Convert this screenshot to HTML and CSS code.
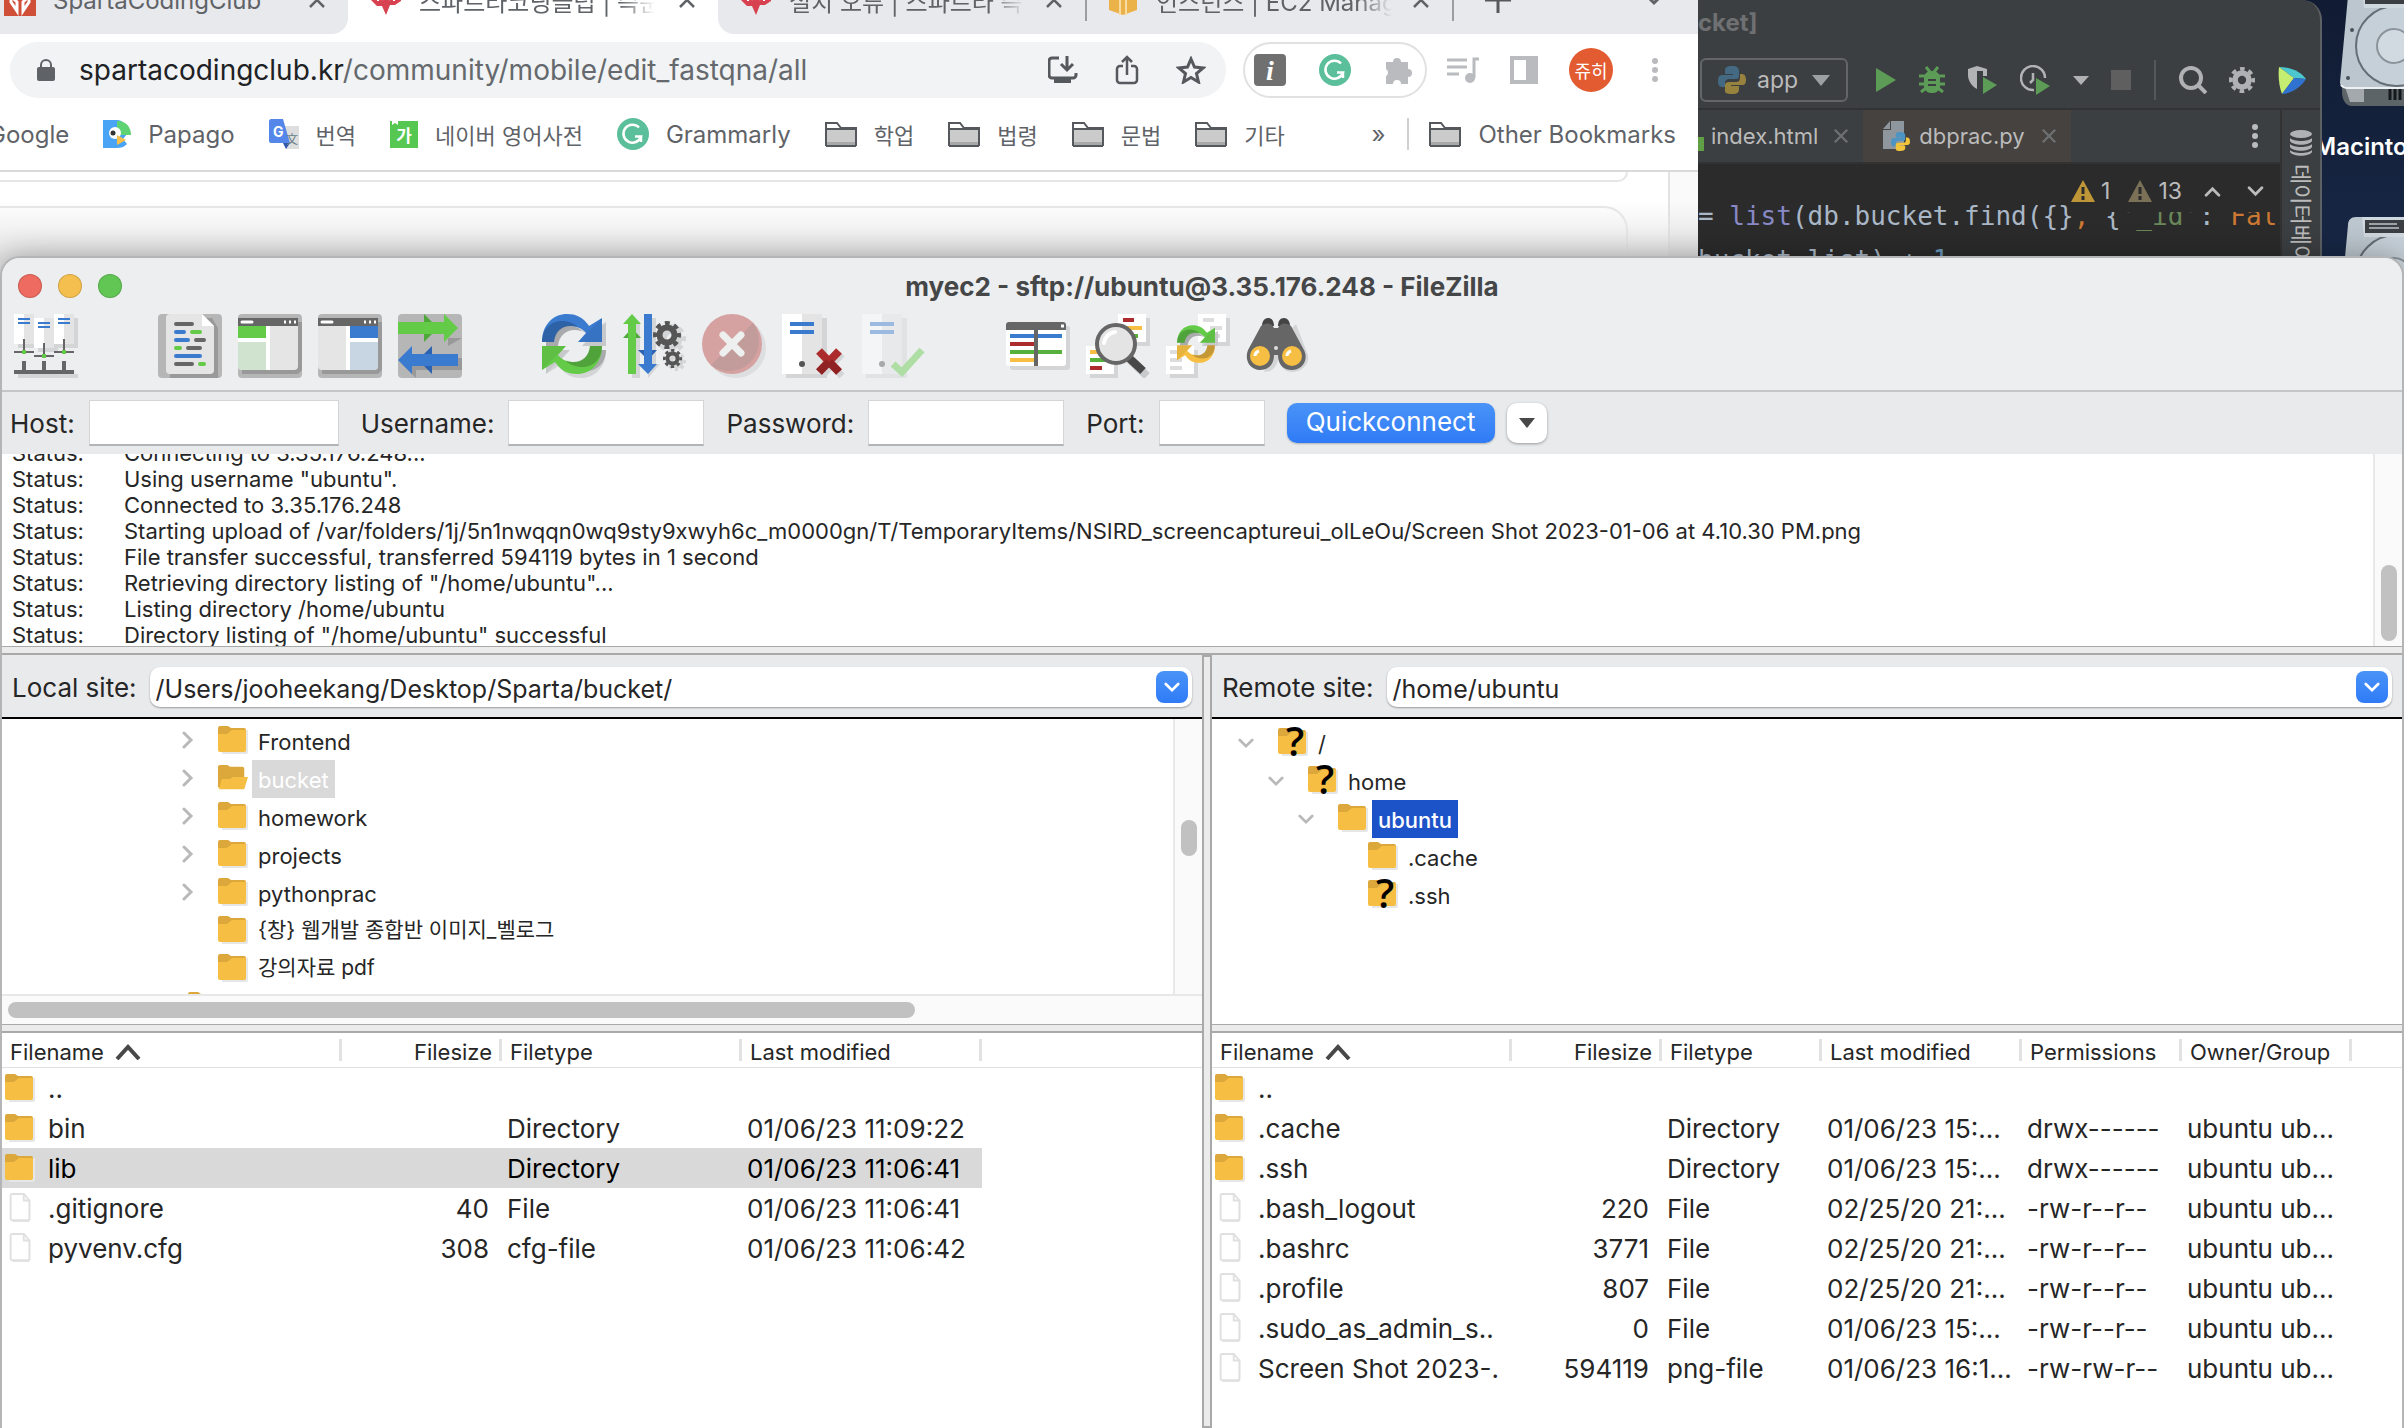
FILE: index.html
```html
<!DOCTYPE html>
<html lang="ko">
<head>
    <meta charset="utf-8">
    <title>myec2 - sftp://ubuntu@3.35.176.248 - FileZilla</title>
    <link rel="stylesheet" href="styles.css">
</head>
<body>
    <!-- Shared icons -->
    <svg class="sprite" aria-hidden="true">
        <symbol id="folder" viewBox="0 0 30 28">
            <path d="M3 4h27v22a2 2 0 0 1-2 2H4z" fill="#e6e6e6"/>
            <path d="M0 2a2 2 0 0 1 2-2h8l3 2h13a2 2 0 0 1 2 2v8H0z" fill="#dda83b"/>
            <path d="M0 8h9l5-4h14v20a2 2 0 0 1-2 2H2a2 2 0 0 1-2-2z" fill="#f6bf43"/>
        </symbol>
        <symbol id="folder-open" viewBox="0 0 32 28">
            <path d="M0 2a2 2 0 0 1 2-2h8l3 2h13a2 2 0 0 1 2 2v20H0z" fill="#dda83b"/>
            <path d="M1 26l3-11h9l3-2h16l-4 13z" fill="#f6bf43"/>
        </symbol>
        <symbol id="folder-unknown" viewBox="0 0 30 32">
            <use href="#folder" y="2" width="30" height="28"/>
            <text x="17" y="30" text-anchor="middle" class="unknown-mark">?</text>
        </symbol>
        <symbol id="file" viewBox="0 0 28 32">
            <path d="M5 1h14l6 7v20a3 3 0 0 1-3 3H8a3 3 0 0 1-3-3z" fill="#e4e4e4"/>
            <path d="M5 1h13l6 7v19a2 2 0 0 1-2 2H6a2 2 0 0 1-2-2V2z" fill="#fff" stroke="#e0e0e0" stroke-width="2"/>
            <path d="M18 1v7h6" fill="none" stroke="#e0e0e0" stroke-width="2"/>
        </symbol>
        <symbol id="chev-right" viewBox="0 0 12 18"><path d="M2 2l7 7-7 7" fill="none" stroke="#b9b9b9" stroke-width="3" stroke-linecap="round"/></symbol>
        <symbol id="chev-down" viewBox="0 0 18 12"><path d="M2 2l7 7 7-7" fill="none" stroke="currentColor" stroke-width="3" stroke-linecap="round"/></symbol>
        <symbol id="cross" viewBox="0 0 18 18"><path d="M2 2l14 14M16 2L2 16" fill="none" stroke="currentColor" stroke-width="2.5"/></symbol>
        <symbol id="bm-folder" viewBox="0 0 32 26">
            <path d="M1 24V2h11l4 5h15v17z" fill="#fff" stroke="#55585c" stroke-width="2"/>
            <path d="M2 9h28v12H2z" fill="#cbcbcb"/><path d="M2 21h28v3H2z" fill="#a9a9a9"/>
            <path d="M1 8h30M1 25h30" stroke="#55585c" stroke-width="2"/>
        </symbol>
        <symbol id="sparta" viewBox="0 0 32 32"><path d="M1 0h30v17l-6 4h-5l-4 10-4-9H7l-6-6z" fill="#d8414f"/><path d="M8 17v-6l4 4 4-5 4 5 4-4v6" fill="none" stroke="#fff" stroke-width="2"/></symbol>
        <symbol id="grammarly" viewBox="0 0 32 32">
            <circle cx="16" cy="16" r="16" fill="#5bbf9b"/>
            <path d="M22 9.500a9 9 0 1 0 2 9h-6M24 18v6" fill="none" stroke="#fff" stroke-width="2.500"/>
        </symbol>
        <symbol id="python" viewBox="0 0 28 28">
            <path d="M14 0c-6 0-7 2-7 5v3h8v1H4c-3 0-4 3-4 6s1 6 4 6h3v-4c0-3 2-4 4-4h7c2 0 3-1 3-3V5c0-3-2-5-7-5z" fill="#4b94c4"/>
            <path d="M14 28c6 0 7-2 7-5v-3h-8v-1h11c3 0 4-2 4-5s-1-6-4-6h-2v4c0 3-2 4-4 4h-7c-2 0-4 1-4 3v6c0 2 2 3 7 3z" fill="#f2c43c"/>
        </symbol>
        <symbol id="warn" viewBox="0 0 24 22"><path d="M12 0l12 22H0z" fill="currentColor"/><path d="M12 7v7M12 16v4" stroke="#2b2b2b" stroke-width="3"/></symbol>
        <symbol id="gear" viewBox="0 0 28 28">
            <circle cx="14" cy="14" r="12" fill="none" stroke="currentColor" stroke-width="4" stroke-dasharray="5 4.420" stroke-dashoffset="2.500"/>
            <circle cx="14" cy="14" r="7.500" fill="none" stroke="currentColor" stroke-width="6"/>
        </symbol>
        <symbol id="half-turn" viewBox="0 0 60 28">
            <path d="M0 28C0 10 12 0 25 0c9 0 16 3 22 12L60 4v24H36l8-9c-4-5-10-7-16-7-9 0-15 6-16 16z" fill="currentColor"/>
            <path d="M0 28C0 14 10 6 22 7c8 1 12 4 14 6-14-4-23 4-24 15z" opacity="0.200"/>
            <path d="M36 28L60 4v24z" opacity="0.060"/>
        </symbol>
        <symbol id="server" viewBox="0 0 46 64">
            <path d="M4 4h41v60H4z" fill="#d3d5d7"/><path d="M0 0h20v60H0z" fill="#fff"/><path d="M20 0h20v60H20z" fill="#e4e4e4"/>
            <path d="M8 10h24M8 18h24" stroke="#3a7bd0" stroke-width="4"/><circle cx="20" cy="50" r="3" fill="#555"/>
        </symbol>
        <symbol id="disk" viewBox="0 0 110 120">
            <path d="M2 88h108v30H12c-6 0-10-6-10-14z" fill="#5d6468"/>
            <path d="M4 96h20v18H10z" fill="#a3a9ad"/>
            <path d="M50 100v12M55 100v12M60 100v12" stroke="#16191c" stroke-width="3"/>
            <path d="M8 8c0-5 3-8 8-8h94v100H8c-5 0-8-2-8-6z" fill="#bcc6ce"/>
            <path d="M1 97c2 3 5 3 7 3h102" fill="none" stroke="#eef1f3" stroke-width="2"/>
            <circle cx="56" cy="58" r="40" fill="#c6d0d8" stroke="#656d75" stroke-width="2"/>
            <circle cx="54" cy="58" r="17" fill="#d1dae1" stroke="#8b949c" stroke-width="2"/>
            <path d="M22 0h88v20H24z" fill="#cfd8de"/><path d="M25 3h85v13H25z" fill="#3b3f44"/>
            <path d="M29 7h28M29 11h30" stroke="#9ba2a8" stroke-width="2"/>
            <circle cx="12" cy="42" r="2" fill="#48505a"/><circle cx="8" cy="90" r="2" fill="#48505a"/>
        </symbol>
    </svg>

    <div class="desktop">
        <!-- Desktop drives -->
        <div class="drive drive-one">
            <svg class="drive-icon"><use href="#disk"/></svg>
            <span class="drive-name">Macintosh HD</span>
        </div>
        <div class="drive drive-two"><svg class="drive-icon"><use href="#disk"/></svg></div>

        <!-- Editor window -->
        <section class="ide">
            <div class="ide-title">cket]</div>
            <div class="ide-toolbar">
                <button class="run-config"><svg class="py dim"><use href="#python"/></svg>app<svg class="tri" viewBox="0 0 18 11"><path d="M0 0h18L9 11z" fill="#9da0a2"/></svg></button>
                <div class="ide-actions">
                    <button aria-label="Run"><svg width="20" height="24"><path d="M0 0l20 12L0 24z" fill="#5c9c57"/></svg></button>
                    <button aria-label="Debug"><svg width="26" height="28" viewBox="0 0 26 28"><path d="M7 1l4 5M19 1l-4 5M0 10h26M0 18h26M2 26l5-4M24 26l-5-4" stroke="#5c9c57" stroke-width="3"/><rect x="5" y="5" width="16" height="22" rx="7" fill="#5c9c57"/><path d="M9 14h8M9 19h8" stroke="#3c3f41" stroke-width="2"/></svg></button>
                    <button aria-label="Coverage"><svg width="30" height="30" viewBox="0 0 30 30"><path d="M1 4l9-3 10 3v7h-4V6h-6v18C4 21 1 15 1 10z" fill="#b2b3b4"/><path d="M16 12l14 8-14 9z" fill="#5c9c57"/></svg></button>
                    <button aria-label="Profile"><svg width="30" height="30" viewBox="0 0 30 30"><path d="M14 25A12 12 0 1 1 25 13M13 8v7l-3 3" fill="none" stroke="#b2b3b4" stroke-width="2.500"/><path d="M16 13l14 8-14 9z" fill="#5c9c57"/></svg></button>
                    <svg width="16" height="9"><path d="M0 0h16L8 9z" fill="#afb1b3"/></svg>
                    <button class="stop" aria-label="Stop"><span></span></button>
                    <i class="ide-sep"></i>
                    <button aria-label="Search"><svg width="28" height="28" viewBox="0 0 28 28"><circle cx="12" cy="12" r="10" fill="none" stroke="#afb1b3" stroke-width="4"/><path d="M19 19l8 8" stroke="#afb1b3" stroke-width="4"/></svg></button>
                    <button class="grey" aria-label="Settings"><svg width="26" height="26"><use href="#gear"/></svg></button>
                    <button aria-label="Assistant"><svg width="28" height="28" viewBox="0 0 28 28"><path d="M1 1c12 0 22 5 27 12L16 12z" fill="#4cc6cf"/><path d="M1 1l15 11L4 28C1 20 0 10 1 1z" fill="#c5ed72"/><path d="M16 12l12 1C23 21 15 27 4 28z" fill="#2f72cf"/></svg></button>
                </div>
            </div>
            <div class="ide-body">
                <div class="ide-main">
                    <nav class="ide-tabs">
                        <div class="ide-tab"><i class="html-mark"></i>index.html<svg class="x"><use href="#cross"/></svg></div>
                        <div class="ide-tab on">
                            <svg width="28" height="30" viewBox="0 0 28 30"><path d="M8 0h13v28H0V9h8z" fill="#8e979e"/><path d="M7 0v8H0z" fill="#8e979e"/><use href="#python" x="8" y="11" width="19" height="19"/></svg>
                            dbprac.py<svg class="x"><use href="#cross"/></svg>
                        </div>
                        <svg class="kebab" viewBox="0 0 6 24"><circle cx="3" cy="3" r="3"/><circle cx="3" cy="12" r="3"/><circle cx="3" cy="21" r="3"/></svg>
                    </nav>
                    <div class="code">
                        <pre>= <b class="fn">list</b>(db.bucket.find({}<b class="kw">,</b> {<b class="str">'_id'</b>: <b class="kw">False</b>
bucket_list) + <b class="num">1</b></pre>
                        <div class="inspections">
                            <svg class="warn"><use href="#warn"/></svg><span>1</span>
                            <svg class="warn weak"><use href="#warn"/></svg><span>13</span>
                            <svg class="arrow up"><use href="#chev-down"/></svg>
                            <svg class="arrow"><use href="#chev-down"/></svg>
                        </div>
                    </div>
                </div>
                <aside class="ide-side">
                    <svg width="22" height="26" viewBox="0 0 22 26"><ellipse cx="11" cy="4" rx="11" ry="4" fill="#afb1b3"/><path d="M0 8c3 4 19 4 22 0v3c-3 5-19 5-22 0zM0 14c3 4 19 4 22 0v3c-3 5-19 5-22 0zM0 20c3 4 19 4 22 0v2c-3 5-19 5-22 0z" fill="#afb1b3"/></svg>
                    <span>데이터베이스</span>
                </aside>
            </div>
        </section>

        <!-- Browser window -->
        <section class="browser">
            <div class="tabs">
                <div class="tab left"><svg class="fav" viewBox="0 0 32 32"><path d="M0 0h32v32H0z" fill="#d04f38"/><path d="M7 6v12l6 9v-9l-3-3V9M25 6v12l-6 9v-9l3-3V9M16 8v8" fill="none" stroke="#fff" stroke-width="3"/></svg><span class="tab-name">SpartaCodingClub</span><svg class="x"><use href="#cross"/></svg></div>
                <div class="tab active"><svg class="fav"><use href="#sparta"/></svg><span class="tab-name">스파르타코딩클럽 | 즉문즉답</span><svg class="x"><use href="#cross"/></svg></div>
                <div class="tab right"><svg class="fav"><use href="#sparta"/></svg><span class="tab-name">설치 오류 | 스파르타 즉문즉답</span><svg class="x"><use href="#cross"/></svg></div>
                <div class="tab ruled"><svg class="fav" viewBox="0 0 32 32"><path d="M2 0h28v26l-14 5-14-5z" fill="#ecb24a"/><path d="M13 0v31M19 0v31" stroke="#f8dca2" stroke-width="2"/></svg><span class="tab-name">인스턴스 | EC2 Management</span><svg class="x"><use href="#cross"/></svg></div>
                <div class="tab-end">
                    <svg width="26" height="26"><path d="M13 0v26M0 13h26" stroke="#55585c" stroke-width="3"/></svg>
                    <svg width="18" height="12"><use href="#chev-down"/></svg>
                </div>
            </div>
            <div class="address-row">
                <div class="address">
                    <svg width="18" height="22" viewBox="0 0 18 22"><path d="M4 9V6a5 5 0 0 1 10 0v3" fill="none" stroke="#5f6368" stroke-width="2"/><rect y="8" width="18" height="14" rx="2" fill="#5f6368"/></svg>
                    <a href="#" class="url">spartacodingclub.kr<span>/community/mobile/edit_fastqna/all</span></a>
                    <div class="address-icons">
                        <button aria-label="Install"><svg width="30" height="28" viewBox="0 0 30 28"><path d="M11 2H4a3 3 0 0 0-3 3v14a3 3 0 0 0 3 3h21a3 3 0 0 0 3-3v-2M19 0v13M13 8l6 6 6-6" fill="none" stroke="#55585c" stroke-width="3"/><path d="M6 23h17v4H6z" fill="#55585c"/></svg></button>
                        <button aria-label="Share"><svg width="24" height="30" viewBox="0 0 24 30"><path d="M8 11H5a3 3 0 0 0-3 3v11a3 3 0 0 0 3 3h14a3 3 0 0 0 3-3V14a3 3 0 0 0-3-3h-3M12 20V3M7 7l5-5 5 5" fill="none" stroke="#55585c" stroke-width="2.500"/></svg></button>
                        <button aria-label="Bookmark"><svg width="30" height="28" viewBox="0 0 30 28"><path d="M15 3l3.500 8 8.500 1-6.500 5.500L22.500 26 15 21.500 7.500 26l2-8.500L3 12l8.500-1z" fill="none" stroke="#55585c" stroke-width="3"/></svg></button>
                    </div>
                </div>
                <div class="extensions">
                    <svg width="32" height="32" viewBox="0 0 32 32"><rect width="32" height="32" rx="4" fill="#707070"/><text x="16" y="26" text-anchor="middle" class="info-mark">i</text></svg>
                    <svg width="32" height="32"><use href="#grammarly"/></svg>
                    <svg width="30" height="30" viewBox="0 0 30 30"><path d="M2 7h7a4 4 0 1 1 8 0h7v7a4 4 0 1 1 0 8v7h-7a4 4 0 0 0-8 0H2v-8a4 4 0 0 0 0-7z" fill="#b9bbbe"/></svg>
                </div>
                <div class="browser-icons">
                    <svg width="32" height="28" viewBox="0 0 32 28"><path d="M0 4h20M0 11h20M0 18h12M27 22V3h5" fill="none" stroke="#b9bbbe" stroke-width="3"/><circle cx="23" cy="22" r="5" fill="#b9bbbe"/></svg>
                    <svg width="28" height="28"><path d="M0 0h28v28H0zM4 4v20h12V4z" fill="#b9bbbe" fill-rule="evenodd"/></svg>
                    <button class="avatar">쥬히</button>
                    <svg class="kebab" viewBox="0 0 6 24"><circle cx="3" cy="3" r="3"/><circle cx="3" cy="12" r="3"/><circle cx="3" cy="21" r="3"/></svg>
                </div>
            </div>
            <nav class="bookmarks">
                <a href="#" class="cut">Google</a>
                <a href="#"><svg width="28" height="28" viewBox="0 0 28 28"><path d="M0 0h14c6 0 10 5 10 14l-4 5 4 5c-3 3-6 4-10 4H0V10z" fill="#49a4f5"/><path d="M14 1c9 0 14 6 14 14H14z" fill="#5fd373"/><circle cx="12" cy="13" r="6" fill="#fff"/><circle cx="10" cy="13" r="2.500" fill="#333"/><path d="M14 15l9 5-9 5z" fill="#f8c04a"/></svg>Papago</a>
                <a href="#"><svg width="30" height="30" viewBox="0 0 30 30"><path d="M12 7h18v23H17z" fill="#dedede"/><path d="M0 2c0-1 1-2 2-2h12l7 24H2c-1 0-2-1-2-2z" fill="#5587ea"/><path d="M14 24h7l-4 6z" fill="#3056ad"/><text x="4" y="18" class="tr-mark">G</text><text x="17" y="25" class="tr-sub">文</text></svg><span class="ko">번역</span></a>
                <a href="#"><svg width="28" height="28" viewBox="0 0 28 28"><path d="M0 1h28v27H0z" fill="#56c750"/><path d="M2 1v4l3-2 3 2V1" fill="#fff"/><text x="14" y="22" text-anchor="middle" class="naver-mark">가</text></svg><span class="ko">네이버 영어사전</span></a>
                <a href="#"><svg width="32" height="32"><use href="#grammarly"/></svg>Grammarly</a>
                <a href="#"><svg class="bm"><use href="#bm-folder"/></svg><span class="ko">학업</span></a>
                <a href="#"><svg class="bm"><use href="#bm-folder"/></svg><span class="ko">법령</span></a>
                <a href="#"><svg class="bm"><use href="#bm-folder"/></svg><span class="ko">문법</span></a>
                <a href="#"><svg class="bm"><use href="#bm-folder"/></svg><span class="ko">기타</span></a>
                <button class="more">»</button>
                <a href="#" class="other"><svg class="bm"><use href="#bm-folder"/></svg>Other Bookmarks</a>
            </nav>
            <div class="page">
                <div class="cards"><div class="card first"></div><div class="card"></div></div>
                <div class="page-scroll"></div>
            </div>
        </section>

        <!-- FileZilla window -->
        <main class="filezilla">
            <header class="titlebar">
                <div class="lights"><i class="red"></i><i class="yellow"></i><i class="green"></i></div>
                <h1>myec2 - sftp://ubuntu@3.35.176.248 - FileZilla</h1>
            </header>

            <div class="toolbar">
                <button aria-label="Site Manager"><svg viewBox="0 0 64 64">
                    <path d="M4 4h20v30H4zM24 8h20v30H24zM44 4h20v30H44zM4 60h60v4H4z" fill="#d3d5d7"/>
                    <path d="M0 0h10v30H0zM20 4h10v30H20zM40 0h10v30H40z" fill="#fff"/><path d="M10 0h10v30H10zM30 4h10v30H30zM50 0h10v30H50z" fill="#e4e4e4"/>
                    <path d="M4 5h12M4 9h12M24 9h12M24 13h12M44 5h12M44 9h12" stroke="#3a7bd0" stroke-width="2"/>
                    <path d="M10 25v13M0 38h20M30 29v13M20 42h20M50 25v13M40 38h20" stroke="#666" stroke-width="2"/>
                    <path d="M8 36h4v4H8zM28 40h4v4h-4zM48 36h4v4h-4z" fill="#64cb49"/><path d="M10 47v11M30 47v11M50 47v11M0 58h60" stroke="#666" stroke-width="4"/>
                </svg></button>
                <button class="gap pressed" aria-label="Toggle message log"><svg viewBox="0 0 64 64">
                    <path d="M12 4h42l6 10v50H12z" fill="#999"/><path d="M12 0h32l12 12v44a4 4 0 0 1-4 4H12a4 4 0 0 1-4-4V4a4 4 0 0 1 4-4z" fill="#e5e5e5"/><path d="M44 0l12 12H44z" fill="#fff"/>
                    <g stroke-width="4" stroke-linecap="round"><path d="M18 10h16M38 26h8M30 34h12M18 50h16" stroke="#666"/><path d="M18 18h8M18 26h12M18 42h24" stroke="#3a7bd0"/><path d="M34 18h8M18 34h4M42 50h4" stroke="#64cb49"/></g>
                </svg></button>
                <button class="pressed" aria-label="Toggle local tree"><svg viewBox="0 0 64 64">
                    <path d="M4 8h60v48l-4 4H4z" fill="#999"/><path d="M0 4h60v48a4 4 0 0 1-4 4H4a4 4 0 0 1-4-4z" fill="#e5e5e5"/><path d="M0 4h60v8H0z" fill="#666"/>
                    <path d="M0 12h28v12H0z" fill="#64cb49"/><path d="M0 28h28v28H4a4 4 0 0 1-4-4z" fill="#d0e3cf"/><path d="M0 26h28M30 12v44" stroke="#fff" stroke-width="4"/>
                    <path d="M4 8h10" stroke="#fff" stroke-width="3" stroke-linecap="round"/><path d="M46 8h2M51 8h2M56 8h2" stroke="#fff" stroke-width="3"/>
                </svg></button>
                <button class="pressed" aria-label="Toggle remote tree"><svg viewBox="0 0 64 64">
                    <path d="M4 8h60v48l-4 4H4z" fill="#999"/><path d="M0 4h60v48a4 4 0 0 1-4 4H4a4 4 0 0 1-4-4z" fill="#e5e5e5"/><path d="M0 4h60v8H0z" fill="#666"/>
                    <path d="M32 12h28v12H32z" fill="#3a7bd0"/><path d="M32 28h28v24a4 4 0 0 1-4 4H32z" fill="#c8d5e2"/><path d="M32 26h28M30 12v44" stroke="#fff" stroke-width="4"/>
                    <path d="M4 8h10" stroke="#fff" stroke-width="3" stroke-linecap="round"/><path d="M46 8h2M51 8h2M56 8h2" stroke="#fff" stroke-width="3"/>
                </svg></button>
                <button class="pressed" aria-label="Toggle queue"><svg viewBox="0 0 64 64">
                    <path d="M4 24h60L50 32V24M4 50l14 14v-8h46V44H10z" fill="#999"/>
                    <path d="M0 8h46V0l14 14-14 14v-8H0z" fill="#64cb49"/><path d="M26 0l8 8h-8zM26 20h8l-8 8z" fill="#4fa93a"/>
                    <path d="M60 40H14v-8L0 46l14 14v-8h46z" fill="#3a7bd0"/><path d="M34 32l-8 8h8zM26 52h8v8z" fill="#2c62b2"/>
                </svg></button>
                <button class="gap" aria-label="Refresh"><svg viewBox="0 0 64 64">
                    <g class="shade"><use href="#half-turn" x="4" y="4" width="60" height="28"/><use href="#half-turn" width="60" height="28" transform="rotate(180 32 32)"/></g>
                    <use href="#half-turn" class="c-blue" width="60" height="28"/><use href="#half-turn" class="c-green" width="60" height="28" transform="rotate(180 30 30)"/>
                </svg></button>
                <button aria-label="Process queue"><svg viewBox="0 0 64 64">
                    <path d="M10 8h8v56h-8zM26 4h8v46h4L26 64z" fill="#d3d5d7"/>
                    <path d="M10 14l9 10H1z" fill="#4fa93a"/><path d="M6 60V10H1l9-10 9 10h-5v50z" fill="#64cb49"/>
                    <path d="M16 36h19l-9 10z" fill="#2c62b2"/><path d="M22 0h8v50h5l-9 10-10-10h6z" fill="#3a7bd0"/>
                    <g class="shade"><use href="#gear" x="35" y="10" width="29" height="29"/><use href="#gear" x="45" y="38" width="19" height="19"/></g>
                    <g class="c-dark"><use href="#gear" x="31" y="7" width="28" height="28"/><use href="#gear" x="41" y="35" width="19" height="19"/></g>
                </svg></button>
                <button aria-label="Cancel"><svg viewBox="0 0 64 64"><circle cx="34" cy="34" r="30" fill="#dcdee0"/><circle cx="30" cy="30" r="30" fill="#d6a2a1"/><path d="M51 9A30 30 0 0 1 9 51z" fill="#c29b9b"/><path d="M21 21l18 18M39 21L21 39" stroke="#eef0f0" stroke-width="7" stroke-linecap="round"/></svg></button>
                <button aria-label="Disconnect"><svg viewBox="0 0 64 64"><use href="#server" width="46" height="64"/><path d="M40 40l20 22M60 40L40 62" stroke="#d3d5d7" stroke-width="7"/><path d="M37 37l20 21M57 37L37 58" stroke="#ac2c2d" stroke-width="8"/><path d="M47 48l10 10M47 48l-10 10" stroke="#861f20" stroke-width="8" opacity="0.700"/></svg></button>
                <button class="off" aria-label="Reconnect"><svg viewBox="0 0 64 64"><use href="#server" width="46" height="64"/><path d="M31 50l9 8 20-22" fill="none" stroke="#64cb49" stroke-width="7"/></svg></button>
                <button class="gap" aria-label="Filters"><svg viewBox="0 0 64 64"><rect x="4" y="12" width="60" height="44" rx="3" fill="#d3d5d7"/><rect y="8" width="60" height="44" rx="3" fill="#fff"/><path d="M0 16v-5a3 3 0 0 1 3-3h54a3 3 0 0 1 3 3v5z" fill="#666"/><path d="M55 12h3" stroke="#fff" stroke-width="3"/>
                    <g stroke-width="4"><path d="M4 22h52" stroke="#3a7bd0"/><path d="M4 30h24" stroke="#ac2c2d"/><path d="M4 38h52" stroke="#56b03c"/><path d="M4 46h24" stroke="#f6bf43"/><path d="M30 16v36" stroke="#666"/></g></svg></button>
                <button aria-label="Search files"><svg viewBox="0 0 64 64"><path d="M36 4h28v28H36zM4 36h28v28H4z" fill="#d3d5d7"/><path d="M32 0h28v28H32zM0 32h28v28H0z" fill="#fff"/>
                    <g stroke-width="4"><path d="M37 6h11M4 54h12" stroke="#ac2c2d"/><path d="M40 14h16M4 38h10" stroke="#f6bf43"/><path d="M44 22h8M4 46h16" stroke="#56b03c"/></g>
                    <path d="M43 45l18 17" stroke="#c8cacc" stroke-width="8"/><path d="M42 43l15 14" stroke="#484848" stroke-width="8"/><circle cx="30" cy="30" r="19" fill="#e4e4e4" stroke="#666" stroke-width="4"/><path d="M18 29c1-6 5-10 11-11" fill="none" stroke="#fff" stroke-width="4" stroke-linecap="round"/></svg></button>
                <button aria-label="Synchronized browsing"><svg viewBox="0 0 64 64"><path d="M36 4h28v28H36zM4 36h28v28H4z" fill="#d3d5d7"/><path d="M32 0h28v28H32zM0 32h28v28H0z" fill="#fff"/><path d="M37 6h11M44 14h12M46 22h8M4 38h8M4 46h12M4 54h12" stroke="#ddd" stroke-width="4"/>
                    <g class="shade"><use href="#half-turn" x="14" y="14" width="38" height="18"/></g>
                    <use href="#half-turn" class="c-green" x="11" y="11" width="38" height="18"/><use href="#half-turn" class="c-yellow" x="11" y="11" width="38" height="18" transform="rotate(180 30 30)"/></svg></button>
                <button aria-label="Find"><svg viewBox="0 0 64 64">
                    <path d="M18 58c10 0 14-8 14-14 2 10 8 14 14 14 8 0 18-6 16-17L50 10 30 30z" fill="#d3d5d7"/>
                    <path d="M16 12c0-4 2-8 6-8s6 3 6 8h4c0-5 2-8 6-8s6 4 6 8z" fill="#444"/>
                    <path d="M15 12c5-4 11-3 13 2h4c2-5 8-6 13-2l13 24c5 10-2 20-12 20-9 0-14-6-14-15h-4c0 9-5 15-14 15C4 56-2 46 2 36z" fill="#666"/>
                    <circle cx="14" cy="42" r="10" fill="#f6bf43"/><circle cx="46" cy="42" r="10" fill="#f6bf43"/><path d="M9 42c0-3 1-4 4-5M41 42c0-3 1-4 4-5" fill="none" stroke="#fff" stroke-width="3"/><circle cx="30" cy="34" r="2" fill="#ddd"/>
                </svg></button>
            </div>

            <form class="connect">
                <label for="host">Host:</label><input id="host" class="wide" type="text">
                <label for="user">Username:</label><input id="user" type="text">
                <label for="pass">Password:</label><input id="pass" type="password">
                <label for="port">Port:</label><input id="port" class="narrow" type="text">
                <button type="button" class="quick">Quickconnect</button>
                <button type="button" class="drop" aria-label="Recent servers"><svg width="16" height="10"><path d="M0 0h16L8 10z" fill="#484848"/></svg></button>
            </form>

            <div class="log">
                <div class="log-lines">
                    <p><span>Status:</span>Connecting to 3.35.176.248...</p>
                    <p><span>Status:</span>Using username "ubuntu".</p>
                    <p><span>Status:</span>Connected to 3.35.176.248</p>
                    <p><span>Status:</span>Starting upload of /var/folders/1j/5n1nwqqn0wq9sty9xwyh6c_m0000gn/T/TemporaryItems/NSIRD_screencaptureui_olLeOu/Screen Shot 2023-01-06 at 4.10.30 PM.png</p>
                    <p><span>Status:</span>File transfer successful, transferred 594119 bytes in 1 second</p>
                    <p><span>Status:</span>Retrieving directory listing of "/home/ubuntu"...</p>
                    <p><span>Status:</span>Listing directory /home/ubuntu</p>
                    <p><span>Status:</span>Directory listing of "/home/ubuntu" successful</p>
                </div>
                <div class="vscroll"><i class="thumb log-thumb"></i></div>
            </div>
            <div class="split"></div>

            <div class="panes">
                <section class="pane local-pane">
                    <div class="site">
                        <label for="local">Local site:</label>
                        <div class="combo"><select id="local"><option>/Users/jooheekang/Desktop/Sparta/bucket/</option></select><span class="combo-btn"><svg width="16" height="11"><use href="#chev-down"/></svg></span></div>
                    </div>
                    <div class="tree-area">
                        <div class="tree-top">
                            <ul class="tree local-tree">
                                <li><svg class="twist"><use href="#chev-right"/></svg><svg class="fold"><use href="#folder"/></svg><span>Frontend</span></li>
                                <li><svg class="twist"><use href="#chev-right"/></svg><svg class="fold"><use href="#folder-open"/></svg><span class="picked-off">bucket</span></li>
                                <li><svg class="twist"><use href="#chev-right"/></svg><svg class="fold"><use href="#folder"/></svg><span>homework</span></li>
                                <li><svg class="twist"><use href="#chev-right"/></svg><svg class="fold"><use href="#folder"/></svg><span>projects</span></li>
                                <li><svg class="twist"><use href="#chev-right"/></svg><svg class="fold"><use href="#folder"/></svg><span>pythonprac</span></li>
                                <li><i class="twist"></i><svg class="fold"><use href="#folder"/></svg><span class="ko">{창} 웹개발 종합반 이미지_벨로그</span></li>
                                <li><i class="twist"></i><svg class="fold"><use href="#folder"/></svg><span class="ko">강의자료 pdf</span></li>
                                <li class="outer"><svg class="fold"><use href="#folder"/></svg></li>
                            </ul>
                            <div class="vscroll"><i class="thumb tree-thumb"></i></div>
                        </div>
                        <div class="hscroll"><i></i></div>
                    </div>
                    <div class="split"></div>
                    <div class="files">
                        <table>
                            <colgroup><col class="w340"><col class="w160"><col class="w240"><col class="w240"><col></colgroup>
                            <thead><tr><th>Filename <svg class="sort" viewBox="0 0 26 16"><path d="M2 15L13 3l11 12" fill="none" stroke="#484848" stroke-width="4"/></svg></th><th class="num-col">Filesize</th><th>Filetype</th><th>Last modified</th><th class="rest"></th></tr></thead>
                            <tbody>
                                <tr><td><svg class="ico"><use href="#folder"/></svg>..</td><td></td><td></td><td></td><td></td></tr>
                                <tr><td><svg class="ico"><use href="#folder"/></svg>bin</td><td></td><td>Directory</td><td>01/06/23 11:09:22</td><td></td></tr>
                                <tr class="picked"><td><svg class="ico"><use href="#folder"/></svg>lib</td><td></td><td>Directory</td><td>01/06/23 11:06:41</td><td></td></tr>
                                <tr><td><svg class="ico"><use href="#file"/></svg>.gitignore</td><td class="num-col">40</td><td>File</td><td>01/06/23 11:06:41</td><td></td></tr>
                                <tr><td><svg class="ico"><use href="#file"/></svg>pyvenv.cfg</td><td class="num-col">308</td><td>cfg-file</td><td>01/06/23 11:06:42</td><td></td></tr>
                            </tbody>
                        </table>
                    </div>
                </section>
                <div class="vsplit"></div>
                <section class="pane remote-pane">
                    <div class="site">
                        <label for="remote">Remote site:</label>
                        <div class="combo"><select id="remote"><option>/home/ubuntu</option></select><span class="combo-btn"><svg width="16" height="11"><use href="#chev-down"/></svg></span></div>
                    </div>
                    <div class="tree-area">
                        <ul class="tree remote-tree">
                            <li><svg class="twist down"><use href="#chev-down"/></svg><svg class="fold q"><use href="#folder-unknown"/></svg><span>/</span></li>
                            <li class="d1"><svg class="twist down"><use href="#chev-down"/></svg><svg class="fold q"><use href="#folder-unknown"/></svg><span>home</span></li>
                            <li class="d2"><svg class="twist down"><use href="#chev-down"/></svg><svg class="fold"><use href="#folder"/></svg><span class="picked-on">ubuntu</span></li>
                            <li class="d3"><i class="twist"></i><svg class="fold"><use href="#folder"/></svg><span>.cache</span></li>
                            <li class="d3"><i class="twist"></i><svg class="fold q"><use href="#folder-unknown"/></svg><span>.ssh</span></li>
                        </ul>
                    </div>
                    <div class="split"></div>
                    <div class="files">
                        <table>
                            <colgroup><col class="w300"><col class="w150"><col class="w160"><col class="w200"><col class="w160"><col class="w170"><col></colgroup>
                            <thead><tr><th>Filename <svg class="sort" viewBox="0 0 26 16"><path d="M2 15L13 3l11 12" fill="none" stroke="#484848" stroke-width="4"/></svg></th><th class="num-col">Filesize</th><th>Filetype</th><th>Last modified</th><th>Permissions</th><th>Owner/Group</th><th class="rest"></th></tr></thead>
                            <tbody>
                                <tr><td><svg class="ico"><use href="#folder"/></svg>..</td><td></td><td></td><td></td><td></td><td></td><td></td></tr>
                                <tr><td><svg class="ico"><use href="#folder"/></svg>.cache</td><td></td><td>Directory</td><td>01/06/23 15:...</td><td>drwx------</td><td>ubuntu ub...</td><td></td></tr>
                                <tr><td><svg class="ico"><use href="#folder"/></svg>.ssh</td><td></td><td>Directory</td><td>01/06/23 15:...</td><td>drwx------</td><td>ubuntu ub...</td><td></td></tr>
                                <tr><td><svg class="ico"><use href="#file"/></svg>.bash_logout</td><td class="num-col">220</td><td>File</td><td>02/25/20 21:...</td><td>-rw-r--r--</td><td>ubuntu ub...</td><td></td></tr>
                                <tr><td><svg class="ico"><use href="#file"/></svg>.bashrc</td><td class="num-col">3771</td><td>File</td><td>02/25/20 21:...</td><td>-rw-r--r--</td><td>ubuntu ub...</td><td></td></tr>
                                <tr><td><svg class="ico"><use href="#file"/></svg>.profile</td><td class="num-col">807</td><td>File</td><td>02/25/20 21:...</td><td>-rw-r--r--</td><td>ubuntu ub...</td><td></td></tr>
                                <tr><td><svg class="ico"><use href="#file"/></svg>.sudo_as_admin_s..</td><td class="num-col">0</td><td>File</td><td>01/06/23 15:...</td><td>-rw-r--r--</td><td>ubuntu ub...</td><td></td></tr>
                                <tr><td><svg class="ico"><use href="#file"/></svg>Screen Shot 2023-.</td><td class="num-col">594119</td><td>png-file</td><td>01/06/23 16:1...</td><td>-rw-rw-r--</td><td>ubuntu ub...</td><td></td></tr>
                            </tbody>
                        </table>
                    </div>
                </section>
            </div>
        </main>
    </div>
</body>
</html>
```
FILE: styles.css
```css
* {
    box-sizing: border-box;
}

body {
    margin: 0;
    font-family: "Inter", "Noto Sans CJK KR", sans-serif;
    font-size: 26px;
    color: #262626;
}

button,
input,
select {
    font: inherit;
    color: inherit;
    margin: 0;
    padding: 0;
    border: 0;
    background: none;
}

svg {
    display: block;
    flex: none;
}

a {
    color: inherit;
    text-decoration: none;
}

.sprite {
    position: absolute;
    width: 0;
    height: 0;
}

/* Desktop, the windows lie freely on it */
.desktop {
    position: relative;
    height: 100vh;
    overflow: hidden;
    background: linear-gradient(180deg, #111c33, #172745 260px, #26344a);
}

.drive {
    position: absolute;
    left: 2340px;
    display: flex;
    flex-direction: column;
    gap: 24px;
}

.drive-one {
    top: -12px;
}

.drive-two {
    top: 217px;
}

.drive-icon {
    width: 110px;
    height: 120px;
}

.drive-name {
    margin-left: -26px;
    font-size: 24px;
    line-height: 30px;
    font-weight: 600;
    color: #fff;
    white-space: nowrap;
}

/* Editor window */
.ide {
    position: absolute;
    left: 1698px;
    top: 0;
    width: 624px;
    height: 300px;
    display: flex;
    flex-direction: column;
    background: #3c3f41;
    border-right: 2px solid #5e6163;
    border-radius: 0 20px 0 0;
    color: #bbb;
    font-size: 23px;
    overflow: hidden;
}

.ide button {
    display: flex;
    align-items: center;
}

.ide-title {
    height: 52px;
    line-height: 46px;
    font-size: 24px;
    font-weight: 700;
    color: #6e7072;
}

.ide-toolbar {
    display: flex;
    align-items: center;
    height: 58px;
    padding: 0 14px 0 2px;
    border-bottom: 2px solid #323334;
}

.ide .run-config {
    width: 148px;
    height: 44px;
    padding: 0 16px;
    gap: 11px;
    border: 2px solid #636567;
    border-radius: 6px;
}

.py {
    width: 28px;
    height: 28px;
}

.dim {
    opacity: 0.5;
}

.tri {
    width: 18px;
    height: 11px;
    margin-left: auto;
}

.ide-actions {
    flex: 1;
    display: flex;
    align-items: center;
    justify-content: space-between;
    margin-left: 28px;
}

.stop span {
    width: 20px;
    height: 20px;
    background: #5f5f5f;
}

.ide-sep {
    width: 2px;
    height: 40px;
    background: #55585a;
}

.grey {
    color: #afb1b3;
}

.ide-body {
    flex: 1;
    display: flex;
    min-height: 0;
}

.ide-main {
    flex: 1;
    min-width: 0;
    display: flex;
    flex-direction: column;
}

.ide-tabs {
    display: flex;
    height: 54px;
    border-bottom: 2px solid #323232;
    align-items: stretch;
}

.ide-tab {
    display: flex;
    align-items: center;
    gap: 15px;
    padding-right: 14px;
    font-size: 22px;
}

.ide-tab.on {
    padding-left: 20px;
    gap: 8px;
    background: #45423f;
}

.ide-tab .x {
    width: 16px;
    height: 16px;
    color: #6e7072;
}

.ide-tab.on .x {
    margin: 0 0 0 8px;
}

.html-mark {
    width: 6px;
    height: 14px;
    margin: 16px -8px 0 0;
    background: #5fa046;
}

.kebab {
    width: 6px;
    height: 26px;
    fill: #b9bbbe;
}

.ide-tabs .kebab {
    align-self: center;
    margin: 0 22px 0 auto;
}

.code {
    flex: 1;
    position: relative;
    overflow: hidden;
    background: #2b2b2b;
}

.code pre {
    margin: 0;
    padding-top: 30px;
    font-family: "DejaVu Sans Mono", "Liberation Mono", monospace;
    font-size: 26px;
    line-height: 44px;
    color: #a9b7c6;
}

.code b {
    font-weight: 400;
}

.fn {
    color: #8888c6;
}

.kw {
    color: #cc7832;
}

.str {
    color: #6a8759;
}

.num {
    color: #6897bb;
}

/* Sits over the first code line */
.inspections {
    position: absolute;
    top: 6px;
    right: 0;
    display: flex;
    align-items: center;
    height: 42px;
    padding-right: 16px;
    gap: 6px;
    background: #2b2b2b;
}

.inspections span {
    margin-right: 12px;
}

.warn {
    width: 24px;
    height: 22px;
    color: #be9637;
}

.warn.weak {
    color: #7b7157;
}

.arrow {
    width: 17px;
    height: 11px;
    margin-left: 20px;
}

.arrow.up {
    transform: rotate(180deg);
    margin-left: 4px;
}

.ide-side {
    width: 40px;
    display: flex;
    flex-direction: column;
    align-items: center;
    gap: 8px;
    padding-top: 20px;
    border-left: 2px solid #323232;
}

.ide-side span {
    writing-mode: vertical-rl;
    text-orientation: sideways;
    font-size: 22px;
    line-height: 24px;
    white-space: nowrap;
}

/* Browser window, its top edge is above the screen */
.browser {
    position: absolute;
    left: 0;
    top: -34px;
    width: 1698px;
    height: 320px;
    display: flex;
    flex-direction: column;
    overflow: hidden;
    background: #fff;
    color: #5f6368;
    font-size: 24px;
}

.tabs {
    flex: none;
    display: flex;
    height: 68px;
    background: #fff;
}

.tab {
    display: flex;
    align-items: center;
    width: 367px;
    padding: 0 22px;
    background: #e8e9ed;
}

.tab .x {
    width: 18px;
    height: 18px;
    margin-left: auto;
}

.tab.left {
    width: 348px;
    padding-left: 4px;
    border-radius: 0 0 16px 0;
}

.tab.active {
    width: 370px;
    background: #fff;
}

.tab.right {
    border-radius: 0 0 0 16px;
}

.fav {
    width: 32px;
    height: 32px;
    margin-right: 17px;
}

.tab-name {
    width: 236px;
    overflow: hidden;
    white-space: nowrap;
    mask-image: linear-gradient(90deg, #000 85%, transparent);
}

.tab.left .tab-name {
    mask-image: none;
}

.tab.ruled,
.tab-end {
    background-image: linear-gradient(#9b9da0, #9b9da0);
    background-size: 2px 42px;
    background-position: left center;
    background-repeat: no-repeat;
}

.tab-end {
    flex: 1;
    display: flex;
    align-items: center;
    justify-content: space-between;
    padding: 0 35px 0 33px;
    background-color: #e8e9ed;
}

.address-row {
    flex: none;
    display: flex;
    align-items: center;
    height: 72px;
    padding: 0 40px 0 10px;
}

.address {
    display: flex;
    align-items: center;
    width: 1216px;
    height: 56px;
    padding: 0 20px 0 27px;
    gap: 24px;
    border-radius: 28px;
    background: #f1f3f4;
}

.url {
    font-size: 28px;
    color: #202124;
}

.url span {
    color: #65696d;
}

.address-icons {
    display: flex;
    align-items: center;
    gap: 37px;
    margin-left: auto;
}

.extensions {
    display: flex;
    align-items: center;
    justify-content: space-between;
    width: 184px;
    height: 56px;
    margin-left: 17px;
    padding: 0 11px 0 9px;
    border: 2px solid #e0e1e3;
    border-radius: 28px;
}

.info-mark {
    font: italic 700 28px "Liberation Serif", serif;
    fill: #fff;
}

.browser-icons {
    flex: 1;
    display: flex;
    align-items: center;
    justify-content: space-between;
    margin-left: 20px;
}

.avatar {
    width: 44px;
    height: 44px;
    margin-right: 8px;
    border-radius: 50%;
    background: #e35b30;
    color: #fff;
    font-size: 18px;
}

.bookmarks {
    flex: none;
    display: flex;
    align-items: center;
    height: 64px;
    padding: 0 22px 8px 0;
    gap: 34px;
    white-space: nowrap;
}

.bookmarks a {
    display: flex;
    align-items: center;
    gap: 17px;
}

.bookmarks .cut {
    margin-left: -12px;
}

.ko {
    font-size: 22px;
}

.bm {
    width: 32px;
    height: 26px;
}

.tr-mark {
    font: 700 14px "Inter", sans-serif;
    fill: #fff;
}

.tr-sub {
    font: 12px "Noto Sans CJK SC", sans-serif;
    fill: #6a7f8a;
}

.naver-mark {
    font: 700 17px "Noto Sans CJK KR", sans-serif;
    fill: #fff;
}

.more {
    margin-left: auto;
    margin-right: -12px;
}

.bookmarks .other {
    height: 32px;
    padding-left: 20px;
    border-left: 2px solid #cfd0d2;
}

.page {
    flex: 1;
    min-height: 0;
    display: flex;
    border-top: 2px solid #d9dadb;
    background: linear-gradient(#fff 30px, #e4e4e4 86px);
}

.cards {
    flex: 1;
    padding-right: 40px;
}

.card {
    height: 100px;
    border: 2px solid #e6e6e6;
    border-left: 0;
    border-radius: 0 24px 0 0;
}

.card.first {
    height: 10px;
    margin-bottom: 24px;
    border-top: 0;
    border-radius: 0 0 20px 0;
}

.page-scroll {
    width: 30px;
    border-left: 2px solid #e2e2e2;
    background: rgba(0, 0, 0, 0.02);
}

/* FileZilla window */
.filezilla {
    position: absolute;
    top: 256px;
    left: 0;
    right: 0;
    bottom: 0;
    display: flex;
    flex-direction: column;
    border: 2px solid #b4b5b6;
    border-bottom: 0;
    border-radius: 20px 20px 0 0;
    overflow: hidden;
    background: #e9eaec;
    box-shadow: 0 0 30px rgba(0, 0, 0, 0.3);
}

.titlebar {
    position: relative;
    display: flex;
    align-items: center;
    justify-content: center;
    height: 56px;
    background: #eceef0;
}

.titlebar h1 {
    margin: 0;
    font-size: 26px;
    font-weight: 700;
    color: #454647;
}

.lights {
    position: absolute;
    left: 16px;
    display: flex;
    gap: 16px;
}

.lights i {
    width: 24px;
    height: 24px;
    border: 1px solid rgba(0, 0, 0, 0.15);
    border-radius: 50%;
}

.red {
    background: #ed6b60;
}

.yellow {
    background: #f5bf4f;
}

.green {
    background: #62c655;
}

.toolbar {
    display: flex;
    gap: 16px;
    padding: 0 12px 12px;
    border-bottom: 2px solid #c4c5c7;
    background: #eceef0;
}

.toolbar svg {
    width: 64px;
    height: 64px;
}

.toolbar .gap {
    margin-left: 64px;
}

.pressed {
    border-radius: 4px;
    background: #b6b6b6;
}

.off {
    opacity: 0.45;
}

.shade {
    color: #d3d5d7;
}

.c-blue {
    color: #3a7bd0;
}

.c-green {
    color: #64cb49;
}

.c-yellow {
    color: #f6bf43;
}

.c-dark {
    color: #555;
}

.connect {
    display: flex;
    align-items: center;
    height: 62px;
    padding: 0 8px;
}

.connect input {
    width: 196px;
    height: 46px;
    margin: 0 22px 0 14px;
    padding: 0 8px;
    background: #fff;
    border: 1px solid #d4d5d7;
    border-bottom: 2px solid #b3b4b6;
}

.connect .wide {
    width: 250px;
}

.connect .narrow {
    width: 106px;
}

.quick {
    width: 208px;
    height: 40px;
    border-radius: 10px;
    background: linear-gradient(#4a93f8, #2f7bf6);
    color: #fff;
    box-shadow: 0 1px 2px rgba(0, 0, 0, 0.25);
}

.connect .quick {
    padding-bottom: 3px;
}

.drop {
    display: flex;
    align-items: center;
    justify-content: center;
    width: 40px;
    height: 40px;
    margin-left: 12px;
    border-radius: 10px;
    background: #fff;
    box-shadow: 0 1px 3px rgba(0, 0, 0, 0.35);
}

/* Message log, scrolled to its end */
.log {
    display: flex;
    height: 192px;
    background: #fff;
    font-size: 22px;
}

.log-lines {
    flex: 1;
    min-width: 0;
    display: flex;
    flex-direction: column;
    justify-content: flex-end;
    padding-left: 10px;
    overflow: hidden;
}

.log p {
    margin: 0;
    padding-top: 4px;
    line-height: 22px;
    white-space: nowrap;
}

.log span {
    display: inline-block;
    width: 112px;
}

.vscroll {
    width: 29px;
    border-left: 2px solid #e8e8e8;
    background: #fafafa;
}

.thumb {
    display: block;
    width: 16px;
    margin-left: 6px;
    border-radius: 8px;
    background: #c1c1c1;
}

.log-thumb {
    height: 76px;
    margin-top: 111px;
}

.tree-thumb {
    height: 36px;
    margin-top: 101px;
}

.split {
    height: 9px;
    border-top: 1px solid #a9a9a9;
    border-bottom: 2px solid #a9a9a9;
    background: #ebebec;
}

.panes {
    flex: 1;
    display: flex;
    min-height: 0;
}

.pane {
    min-width: 0;
    display: flex;
    flex-direction: column;
}

.local-pane {
    flex: 120;
}

.remote-pane {
    flex: 119;
}

.vsplit {
    width: 10px;
    border: 2px solid #a9a9a9;
    background: #ebebec;
}

.site {
    display: flex;
    align-items: center;
    height: 64px;
    padding: 2px 10px 0 10px;
    gap: 13px;
    border-bottom: 2px solid #000;
}

.combo {
    flex: 1;
    position: relative;
    height: 40px;
    border-radius: 10px;
    background: #fff;
    box-shadow: 0 1px 2px rgba(0, 0, 0, 0.35);
}

.combo select {
    width: 100%;
    height: 40px;
    padding: 4px 48px 0 6px;
    font-size: 25px;
    appearance: none;
}

/* Arrow over the end of the drop-down */
.combo-btn {
    position: absolute;
    top: 4px;
    right: 4px;
    display: flex;
    align-items: center;
    justify-content: center;
    width: 32px;
    height: 32px;
    border-radius: 8px;
    background: linear-gradient(#4a93f8, #2f7bf6);
    color: #fff;
    pointer-events: none;
}

.tree-area {
    display: flex;
    flex-direction: column;
    height: 305px;
    background: #fff;
    font-size: 22px;
}

.tree-top {
    flex: 1;
    display: flex;
    min-height: 0;
}

.tree {
    flex: 1;
    margin: 0;
    padding: 0;
    list-style: none;
    overflow: hidden;
}

.tree li {
    display: flex;
    height: 38px;
}

.tree span {
    padding: 2px 6px 0;
    line-height: 36px;
    white-space: nowrap;
}

.tree .ko {
    padding-top: 0;
    font-size: 21px;
}

.local-tree {
    padding: 3px 0 0 180px;
}

.remote-tree {
    padding: 5px 0 0 26px;
}

.d1 {
    margin-left: 30px;
}

.d2 {
    margin-left: 60px;
}

.d3 {
    margin-left: 90px;
}

.twist {
    width: 12px;
    height: 18px;
    margin: 9px 24px 0 0;
    color: #b9b9b9;
}

.twist.down {
    width: 16px;
    height: 11px;
    margin-top: 14px;
}

.remote-tree i.twist {
    width: 16px;
}

.fold {
    width: 30px;
    height: 28px;
    margin: 4px 4px 0 0;
}

.fold.q {
    height: 32px;
    margin-top: 2px;
}

.outer .fold {
    margin-left: 6px;
}

.unknown-mark {
    font: 600 40px "Open Sans", sans-serif;
    fill: #000;
}

.picked-off {
    background: #d9d9d9;
    color: #fff;
}

.picked-on {
    background: #1d53c8;
    color: #fff;
    font-weight: 500;
}

.hscroll {
    height: 30px;
    padding: 6px 0 0 6px;
    border-top: 2px solid #e8e8e8;
    background: #fafafa;
}

.hscroll i {
    display: block;
    width: 76%;
    height: 16px;
    border-radius: 8px;
    background: #c1c1c1;
}

/* File lists */
.files {
    flex: 1;
    min-height: 0;
    overflow: hidden;
    background: #fff;
}

table {
    width: 100%;
    table-layout: fixed;
    border-collapse: separate;
    border-spacing: 0;
}

.w150 {
    width: 150px;
}

.w160 {
    width: 160px;
}

.w170 {
    width: 170px;
}

.w200 {
    width: 200px;
}

.w240 {
    width: 240px;
}

.w300 {
    width: 300px;
}

.w340 {
    width: 340px;
}

th {
    height: 35px;
    padding: 4px 10px 0 8px;
    border-bottom: 1px solid #e0e0e0;
    background: linear-gradient(#e2e2e2, #e2e2e2) right center / 3px 22px no-repeat;
    font-size: 22px;
    line-height: 30px;
    font-weight: 400;
    text-align: left;
    white-space: nowrap;
}

th.rest {
    background: none;
}

.sort {
    display: inline-block;
    width: 26px;
    height: 16px;
    margin-left: 5px;
}

td {
    height: 40px;
    padding: 1px 13px 0 5px;
    line-height: 38px;
    white-space: nowrap;
    overflow: hidden;
}

td:first-child {
    padding: 1px 0 0 3px;
}

.num-col {
    text-align: right;
}

.ico {
    float: left;
    width: 30px;
    height: 30px;
    margin: 3px 13px 0 0;
}

.picked td:not(:last-child) {
    background: #d9d9d9;
    color: #000;
}
```
